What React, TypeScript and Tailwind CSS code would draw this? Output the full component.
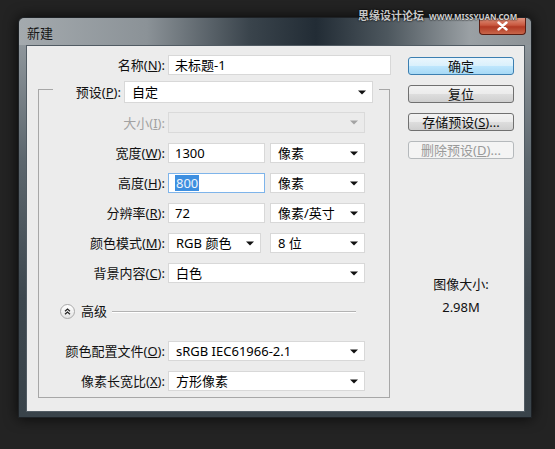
import React from "react";

const font = "font-['Noto_Sans','Noto_Sans_CJK_SC',sans-serif]";

function Caret({ muted }: { muted?: boolean }) {
  return (
    <svg width="8" height="5" viewBox="0 0 8 5" className="shrink-0">
      <path d="M0 0.5h8L4 4.5z" fill={muted ? "#a3a3a3" : "#111"} />
    </svg>
  );
}

function Select({ value, className, muted }: { value?: string; className: string; muted?: boolean }) {
  return (
    <div
      className={`flex items-center justify-between pl-[7px] pr-[6px] border ${
        muted ? "bg-[#ebebeb] border-[#dadada]" : "bg-white border-[#d8d8d8]"
      } ${className}`}
    >
      <span>{value}</span>
      <Caret muted={muted} />
    </div>
  );
}

function Field({ value, className }: { value: React.ReactNode; className: string }) {
  return <div className={`flex items-center pl-[6px] bg-white border ${className}`}>{value}</div>;
}

function Label({ children, muted }: { children: React.ReactNode; muted?: boolean }) {
  return (
    <div className={`w-[129px] pr-[3px] text-right ${muted ? "text-[#a2a2a2]" : "text-[#111]"}`}>{children}</div>
  );
}

function Button({ children, variant }: { children: React.ReactNode; variant?: "default" | "disabled" }) {
  const look =
    variant === "default"
      ? "border-[#3c7fb1] bg-[linear-gradient(to_bottom,#eaf6fd,#d9f0fc_50%,#bee6fd_51%,#a7d9f5)] text-[#111]"
      : variant === "disabled"
      ? "border-[#b5b9bc] bg-[#f4f4f4] text-[#9a9a9a]"
      : "border-[#707070] bg-[linear-gradient(to_bottom,#f2f2f2,#ebebeb_50%,#dddddd_51%,#cfcfcf)] text-[#111]";
  return (
    <div className={`h-[18px] flex items-center justify-center rounded-[3px] border ${look}`}>{children}</div>
  );
}

export default function App() {
  return (
    <div className={`relative min-h-screen w-[555px] h-[449px] bg-[#232323] pt-[17px] pl-[18px] text-[13px] leading-[16px] ${font}`}>
      {/* window */}
      <div className="w-[514px] h-[401px] rounded-t-[6px] pl-[7px] pr-[6px] pb-[6px] shadow-[0_0_14px_rgba(0,0,0,0.8)] border border-[#1e2226] bg-[linear-gradient(to_bottom,#9aa1a6,#5d676e_35%,#3d474e_70%,#39434a)]">
        <div className="-mx-[7px] -mr-[6px] h-[27px] flex justify-between items-start rounded-t-[6px] bg-[linear-gradient(to_right,#a4aaae,#8b9297_25%,#3a444c_45%,#222c35_58%,#4d575e_72%,#9aa0a4_88%,#8d9397)]">
          <div className="pl-[8px] pt-[7px] text-[#161616]">新建</div>
          <div className="mr-[5px] w-[47px] h-[17px] flex items-center justify-center rounded-b-[4px] border border-[#5a1d12] border-t-0 bg-[linear-gradient(to_bottom,#e0947f,#c8583f_45%,#b23a24_55%,#c8664a)]">
            <svg width="11" height="10" viewBox="0 0 11 10">
              <path d="M1.5 1.5l8 7M9.5 1.5l-8 7" stroke="#fff" strokeWidth="2.4" strokeLinecap="round" />
            </svg>
          </div>
        </div>

        {/* client */}
        <div className="h-[367px] border border-[#515b63] bg-[#ececec] flex">
          <div className="w-[364px] flex flex-col">
            <div className="mt-[9px] flex items-center h-[20px]">
              <div className="w-[141px] pr-[3px] text-right text-[#111]">
                名称(<span className="underline">N</span>):
              </div>
              <Field value="未标题-1" className="w-[223px] h-[20px] border-[#d8d8d8]" />
            </div>

            <div className="mt-[14px] ml-[11px] w-[352px] border-l border-r border-b border-[#a7a7a7] pb-[6px]">
              <div className="-mt-[8px] flex items-start h-[22px]">
                <div className="w-[14px] h-px mt-[8px] bg-[#a7a7a7]" />
                <div className="w-[71px] pr-[3px] text-right h-[22px] flex items-center justify-end text-[#111]">
                  预设(<span className="underline">P</span>):
                </div>
                <Select value="自定" className="w-[249px] h-[22px]" />
                <div className="ml-[6px] w-[10px] h-px mt-[8px] bg-[#a7a7a7]" />
              </div>

              <div className="mt-[9px] flex items-center h-[21px]">
                <Label muted>
                  大小(<span className="underline">I</span>):
                </Label>
                <Select className="w-[197px] h-[21px]" muted />
              </div>

              <div className="mt-[10px] flex items-center h-[20px]">
                <Label>
                  宽度(<span className="underline">W</span>):
                </Label>
                <Field value="1300" className="w-[97px] h-[20px] border-[#d8d8d8]" />
                <Select value="像素" className="ml-[5px] w-[95px] h-[20px]" />
              </div>

              <div className="mt-[10px] flex items-center h-[20px]">
                <Label>
                  高度(<span className="underline">H</span>):
                </Label>
                <Field
                  value={<span className="bg-[#3e8fe0] text-[#eef4fb] px-px">800</span>}
                  className="w-[97px] h-[20px] border-[#7eb4ea] pl-[5px]"
                />
                <Select value="像素" className="ml-[5px] w-[95px] h-[20px]" />
              </div>

              <div className="mt-[10px] flex items-center h-[20px]">
                <Label>
                  分辨率(<span className="underline">R</span>):
                </Label>
                <Field value="72" className="w-[97px] h-[20px] border-[#d8d8d8]" />
                <Select value="像素/英寸" className="ml-[5px] w-[95px] h-[20px]" />
              </div>

              <div className="mt-[10px] flex items-center h-[20px]">
                <Label>
                  颜色模式(<span className="underline">M</span>):
                </Label>
                <Select value="RGB 颜色" className="w-[93px] h-[20px]" />
                <Select value="8 位" className="ml-[9px] w-[95px] h-[20px]" />
              </div>

              <div className="mt-[10px] flex items-center h-[20px]">
                <Label>
                  背景内容(<span className="underline">C</span>):
                </Label>
                <Select value="白色" className="w-[197px] h-[20px]" />
              </div>

              <div className="mt-[20px] flex items-center h-[16px]">
                <div className="ml-[21px] w-[15px] h-[15px] rounded-full border border-[#a9a9a9] bg-[linear-gradient(to_bottom,#ffffff,#e4e4e4)] flex items-center justify-center">
                  <svg width="7" height="7" viewBox="0 0 7 7">
                    <path d="M1 3.2L3.5 1 6 3.2M1 6.2L3.5 4 6 6.2" stroke="#222" strokeWidth="1.2" fill="none" />
                  </svg>
                </div>
                <div className="ml-[6px] text-[#111]">高级</div>
                <div className="ml-[5px] w-[244px] h-px bg-[#b3b3b3] shadow-[0_1px_0_#fff]" />
              </div>

              <div className="mt-[22px] flex items-center h-[20px]">
                <Label>
                  颜色配置文件(<span className="underline">O</span>):
                </Label>
                <Select value="sRGB IEC61966-2.1" className="w-[197px] h-[20px]" />
              </div>

              <div className="mt-[10px] flex items-center h-[20px]">
                <Label>
                  像素长宽比(<span className="underline">X</span>):
                </Label>
                <Select value="方形像素" className="w-[197px] h-[20px]" />
              </div>
            </div>
          </div>

          <div className="ml-[17px] w-[106px] flex flex-col">
            <div className="mt-[11px] flex flex-col gap-[10px]">
              <Button variant="default">确定</Button>
              <Button>复位</Button>
              <Button>
                存储预设(<span className="underline">S</span>)...
              </Button>
              <Button variant="disabled">
                删除预设(<span className="underline">D</span>)...
              </Button>
            </div>
            <div className="mt-[117px] text-center text-[#111]">图像大小:</div>
            <div className="mt-[7px] text-center text-[#111]">2.98M</div>
          </div>
        </div>
      </div>

      {/* watermark */}
      <div className="absolute left-[358px] top-[8px] flex items-end gap-[5px] [text-shadow:0_0_1px_#000,0_0_2px_#000]">
        <span className="text-[11px] leading-[16px] font-bold text-[#c8c8c8]">思缘设计论坛</span>
        <span className="text-[8px] leading-[12px] font-bold text-[#d0d0d0] pb-[1px]">WWW.MISSYUAN.COM</span>
      </div>
    </div>
  );
}
